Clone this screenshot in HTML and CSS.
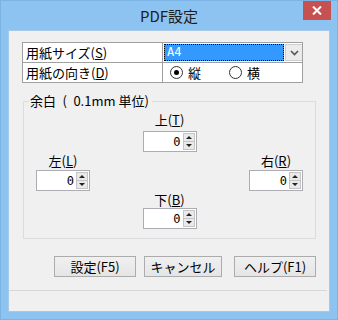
FILE: index.html
```html
<!DOCTYPE html>
<html lang="ja">
<head>
    <meta charset="UTF-8">
    <title>PDF設定</title>
    <link rel="stylesheet" href="styles.css">
</head>
<body>
    <div class="window">
        <div class="titlebar">
            <span></span>
            <span class="title">PDF設定</span>
            <div class="close">
                <svg width="10" height="9" viewBox="0 0 10 9"><path d="M1 0.5 L9 8.5 M9 0.5 L1 8.5" stroke="#fff" stroke-width="2"/></svg>
            </div>
        </div>

        <div class="client">
            <!-- Paper settings -->
            <table class="paper">
                <tr>
                    <td class="label">用紙サイズ(<u>S</u>)</td>
                    <td class="value">
                        <div class="combo">
                            <div class="combo-text">A4</div>
                            <div class="combo-btn">
                                <svg width="9" height="6" viewBox="0 0 9 6"><path d="M1 1 L4.5 4.5 L8 1" stroke="#555" stroke-width="1.6" fill="none"/></svg>
                            </div>
                        </div>
                    </td>
                </tr>
                <tr>
                    <td class="label">用紙の向き(<u>D</u>)</td>
                    <td class="value">
                        <div class="radios">
                            <span class="radio checked"></span><span class="radio-label">縦</span>
                            <span class="radio"></span><span class="radio-label">横</span>
                        </div>
                    </td>
                </tr>
            </table>

            <!-- Margins -->
            <fieldset class="margins">
                <legend>余白&ensp;(&ensp;0.1mm 単位)</legend>
                <div class="margin-row top">
                    <div class="field">
                        <span class="field-label">上(<u>T</u>)</span>
                        <div class="spin"><span class="spin-value">0</span><span class="spin-btns"><i class="up"></i><i class="down"></i></span></div>
                    </div>
                </div>
                <div class="margin-row sides">
                    <div class="field">
                        <span class="field-label">左(<u>L</u>)</span>
                        <div class="spin"><span class="spin-value">0</span><span class="spin-btns"><i class="up"></i><i class="down"></i></span></div>
                    </div>
                    <div class="field">
                        <span class="field-label">右(<u>R</u>)</span>
                        <div class="spin"><span class="spin-value">0</span><span class="spin-btns"><i class="up"></i><i class="down"></i></span></div>
                    </div>
                </div>
                <div class="margin-row bottom">
                    <div class="field">
                        <span class="field-label">下(<u>B</u>)</span>
                        <div class="spin"><span class="spin-value">0</span><span class="spin-btns"><i class="up"></i><i class="down"></i></span></div>
                    </div>
                </div>
            </fieldset>

            <!-- Buttons -->
            <div class="buttons">
                <button class="btn btn-ok">設定(F5)</button>
                <button class="btn btn-cancel">キャンセル</button>
                <button class="btn btn-help">ヘルプ(F1)</button>
            </div>

            <div class="statusbar"></div>
        </div>
    </div>
</body>
</html>
```

FILE: styles.css
```css
body {
    margin: 0;
    font-family: "Noto Sans CJK JP", "Liberation Sans", sans-serif;
    font-size: 13px;
    color: #000;
    background: #fff;
}

.window {
    width: 338px;
    height: 320px;
    box-sizing: border-box;
    background: #8cc3f1;
    padding: 0 7px 7px 7px;
    border: 1px solid #7bb3e4;
    display: flex;
    flex-direction: column;
}

.titlebar {
    height: 29px;
    display: grid;
    grid-template-columns: 1fr auto 1fr;
    align-items: center;
}

.title {
    font-size: 15px;
    color: #1e1e1e;
    margin-top: -1px;
}

.close {
    justify-self: end;
    align-self: start;
    width: 28px;
    height: 19px;
    margin-right: -1px;
    background: #c75050;
    display: flex;
    align-items: center;
    justify-content: center;
}

.client {
    flex: 1;
    background: #f0f0f0;
    border: 1px solid #a7c8e6;
    display: flex;
    flex-direction: column;
}

/* paper table */
.paper {
    border-collapse: collapse;
    margin: 11px 0 0 13px;
    width: 281px;
    background: #fff;
}

.paper td {
    border: 1px solid #a0a0a0;
    height: 19px;
    padding: 0;
    line-height: 18px;
}

.paper .label {
    width: 136px;
    padding-left: 3px;
    background: #fff;
}

.combo {
    display: flex;
    height: 17px;
    margin: 0 0 0 1px;
}

.combo-text {
    flex: 1;
    background: #3399ff;
    color: #fff;
    outline: 1px dotted #000;
    outline-offset: -1px;
    padding-left: 3px;
    line-height: 16px;
    font-family: "DejaVu Sans Mono", monospace;
    font-size: 12px;
}

.combo-btn {
    width: 16px;
    margin-left: 1px;
    background: #ebebeb;
    border: 1px solid #cfcfcf;
    border-right: 0;
    display: flex;
    align-items: center;
    justify-content: center;
}

.radios {
    display: flex;
    align-items: center;
    padding-left: 7px;
}

.radio {
    width: 11px;
    height: 11px;
    border: 1px solid #333;
    border-radius: 50%;
    background: #fff;
    display: flex;
    align-items: center;
    justify-content: center;
}

.radio.checked::after {
    content: "";
    width: 5px;
    height: 5px;
    border-radius: 50%;
    background: #000;
}

.radio-label {
    margin: 0 28px 0 5px;
}

/* margins group */
.margins {
    margin: 10px 0 0 14px;
    width: 293px;
    height: 146px;
    box-sizing: border-box;
    border: 1px solid #dcdcdc;
    padding: 0 12px;
}

.margins legend {
    padding: 0 3px 0 1px;
    margin-left: -7px;
    line-height: 16px;
}

.margin-row {
    display: flex;
    justify-content: center;
}

.margin-row.sides {
    justify-content: space-between;
}

.field {
    display: flex;
    flex-direction: column;
    align-items: center;
}

.field-label {
    line-height: 17px;
    height: 17px;
}

.margin-row.top .field-label {
    margin-top: 2px;
}

.spin {
    width: 54px;
    height: 21px;
    box-sizing: border-box;
    border: 1px solid #abadb3;
    background: #fff;
    display: flex;
    align-items: center;
    margin-top: 3px;
}

.margin-row.sides .spin {
    margin-top: 1px;
}

.margin-row.bottom .spin {
    margin-top: 0;
}

.spin-value {
    flex: 1;
    text-align: right;
    padding-right: 2px;
    font-family: "DejaVu Sans Mono", monospace;
    font-size: 12px;
}

.spin-btns {
    width: 12px;
    height: 17px;
    margin-right: 1px;
    display: flex;
    flex-direction: column;
}

.spin-btns i {
    flex: 1;
    background: #e9e9e9;
    border: 1px solid #c4c4c4;
    display: flex;
    align-items: center;
    justify-content: center;
}

.spin-btns i + i {
    border-top: 0;
}

.spin-btns .up::after {
    content: "";
    border-left: 3px solid transparent;
    border-right: 3px solid transparent;
    border-bottom: 3px solid #222;
}

.spin-btns .down::after {
    content: "";
    border-left: 3px solid transparent;
    border-right: 3px solid transparent;
    border-top: 3px solid #222;
}

/* buttons */
.buttons {
    display: flex;
    justify-content: flex-end;
    margin: 17px 13px 0 0;
}

.btn {
    height: 21px;
    box-sizing: border-box;
    border: 1px solid #acacac;
    background: linear-gradient(#f0f0f0, #e5e5e5);
    font-family: inherit;
    font-size: 13px;
    padding: 0;
    line-height: 18px;
    color: #000;
}

.btn-ok {
    width: 82px;
}

.btn-cancel {
    width: 78px;
    margin-left: 8px;
}

.btn-help {
    width: 82px;
    margin-left: 12px;
}

.statusbar {
    margin-top: 13px;
    border-top: 1px solid #d7d7d7;
    margin-right: 2px;
}
```
